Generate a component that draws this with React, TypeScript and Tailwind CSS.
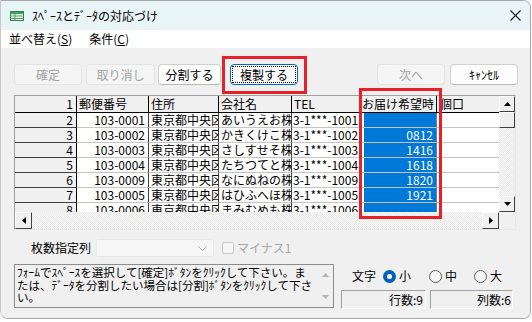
import React from "react";

const rows: string[][] = [
  ["2", "103-0001", "東京都中央区日本橋", "あいうえお株式会社", "3-1***-1001", ""],
  ["3", "103-0002", "東京都中央区日本橋", "かきくけこ株式会社", "3-1***-1002", "0812"],
  ["4", "103-0003", "東京都中央区日本橋", "さしすせそ株式会社", "3-1***-1003", "1416"],
  ["5", "103-0004", "東京都中央区日本橋", "たちつてと株式会社", "3-1***-1004", "1618"],
  ["6", "103-0009", "東京都中央区日本橋", "なにぬねの株式会社", "3-1***-1009", "1820"],
  ["7", "103-0005", "東京都中央区日本橋", "はひふへほ株式会社", "3-1***-1005", "1921"],
  ["8", "103-0006", "東京都中央区日本橋", "まみむめも株式会社", "3-1***-1006", ""],
];

function Tri({ dir, color = "#000" }: { dir: "up" | "down" | "left" | "right"; color?: string }) {
  const pts =
    dir === "up"
      ? "0,4 3.5,0 7,4"
      : dir === "down"
      ? "0,0 7,0 3.5,4"
      : dir === "left"
      ? "4,0 4,7 0,3.5"
      : "0,0 0,7 4,3.5";
  const w = dir === "up" || dir === "down" ? 7 : 4;
  const h = dir === "up" || dir === "down" ? 4 : 7;
  return (
    <svg width={w} height={h} viewBox={`0 0 ${w} ${h}`}>
      <polygon points={pts} fill={color} />
    </svg>
  );
}

function SBtn({ dir, className }: { dir: "up" | "down" | "left" | "right"; className: string }) {
  return (
    <div
      className={
        "flex shrink-0 items-center justify-center border border-t-[#fcfcfc] border-l-[#fcfcfc] border-r-[#404040] border-b-[#404040] bg-[#f0f0f0] " +
        className
      }
    >
      <Tri dir={dir} />
    </div>
  );
}

const track =
  "bg-[repeating-conic-gradient(#ffffff_0_25%,#e6e6e6_0_50%)] bg-[length:2px_2px]";

function Btn({ label, w, disabled }: { label: string; w: string; disabled?: boolean }) {
  return (
    <div
      className={
        "flex h-[21px] items-center justify-center rounded-[4px] border text-[12px] leading-none " +
        w +
        (disabled
          ? " border-[#e3e3e3] bg-[#f5f5f5] text-[#a2a2a2]"
          : " border-[#d0d0d0] border-b-[#b8b8b8] bg-[#fdfdfd] text-black")
      }
    >
      {label}
    </div>
  );
}

function Radio({ on }: { on?: boolean }) {
  return on ? (
    <div className="flex h-[13px] w-[13px] items-center justify-center rounded-full bg-[#005fb8]">
      <div className="h-[5px] w-[5px] rounded-full bg-white" />
    </div>
  ) : (
    <div className="h-[13px] w-[13px] rounded-full border border-[#5c5c5c] bg-[#f6f6f6]" />
  );
}

export default function App() {
  return (
    <div className="relative h-[322px] w-[532px] bg-white font-['Noto_Sans_CJK_JP',sans-serif] text-black">
      <div className="flex h-[319px] w-[531px] flex-col overflow-hidden rounded-tr-[8px] rounded-b-[8px] border border-[#a8a8a8] border-l-[#c8c8c8]">
        {/* title bar */}
        <div className="flex h-[29px] shrink-0 items-center bg-[#e8f4f6] pl-[9px]">
          <svg width="14" height="10" viewBox="0 0 14 10">
            <rect x="0.5" y="0.5" width="13" height="9" fill="#ffffff" stroke="#2f8a43" />
            <rect x="1" y="1" width="12" height="2" fill="#3aa357" />
            <line x1="1" y1="5" x2="13" y2="5" stroke="#3aa357" />
            <line x1="1" y1="7.5" x2="13" y2="7.5" stroke="#3aa357" />
            <line x1="5" y1="3" x2="5" y2="9" stroke="#3aa357" />
          </svg>
          <span className="ml-[8px] text-[12px] leading-none">ｽﾍﾟｰｽとﾃﾞｰﾀの対応づけ</span>
          <svg className="ml-auto mr-[9px]" width="11" height="11" viewBox="0 0 11 11">
            <path d="M0.5 0.5 L10.5 10.5 M10.5 0.5 L0.5 10.5" stroke="#1a1a1a" strokeWidth="1.1" />
          </svg>
        </div>
        {/* menu */}
        <div className="flex h-[18px] shrink-0 items-center gap-[17px] bg-white pl-[8px] text-[12px] leading-none">
          <span>
            並べ替え(<span className="underline">S</span>)
          </span>
          <span>
            条件(<span className="underline">C</span>)
          </span>
        </div>
        {/* body */}
        <div className="flex flex-1 flex-col bg-[#f0f0f0] pl-[13px] pr-[12px]">
          {/* buttons */}
          <div className="mt-[16px] flex h-[21px] items-center">
            <Btn label="確定" w="w-[68px]" disabled />
            <div className="w-[4px]" />
            <Btn label="取り消し" w="w-[69px]" disabled />
            <div className="w-[3px]" />
            <Btn label="分割する" w="w-[63px]" />
            <div className="w-[9px]" />
            <div className="relative flex h-[21px] w-[68px] items-center justify-center rounded-[4px] border border-[#0067c0] bg-[#fdfdfd] text-[12px] leading-none">
              <div className="absolute inset-[1px] border border-dotted border-black" />
              複製する
            </div>
            <div className="ml-auto flex gap-[5px]">
              <Btn label="次へ" w="w-[68px]" disabled />
              <Btn label="ｷｬﾝｾﾙ" w="w-[68px]" />
            </div>
          </div>
          {/* grid */}
          <div className="mt-[10px] flex h-[135px] w-[502px] flex-col border border-[#a0a0a0] border-r-[#e8e8e8] border-b-[#e8e8e8] text-[12px]">
            <div className="flex h-[116px]">
              <div className="h-[116px] w-[484px] overflow-hidden bg-white">
                {/* header */}
                <div className="flex h-[17px] leading-[15px]">
                  <div className="w-[62px] shrink-0 border-r border-b border-black bg-[#f0f0f0] pr-[3px] text-right">1</div>
                  <div className="w-[72px] shrink-0 overflow-hidden whitespace-nowrap border-r border-b border-black bg-[#f0f0f0] pl-[2px]">郵便番号</div>
                  <div className="w-[70px] shrink-0 overflow-hidden whitespace-nowrap border-r border-b border-black bg-[#f0f0f0] pl-[2px]">住所</div>
                  <div className="w-[73px] shrink-0 overflow-hidden whitespace-nowrap border-r border-b border-black bg-[#f0f0f0] pl-[2px]">会社名</div>
                  <div className="w-[69px] shrink-0 overflow-hidden whitespace-nowrap border-r border-b border-black bg-[#f0f0f0] pl-[2px]">TEL</div>
                  <div className="w-[76px] shrink-0 overflow-hidden whitespace-nowrap border-r border-b border-black bg-[#f0f0f0] pl-[1px]">お届け希望時</div>
                  <div className="w-[62px] shrink-0 overflow-hidden whitespace-nowrap border-b border-black bg-[#f0f0f0] pl-[3px]">個口</div>
                </div>
                {rows.map((r) => (
                  <div key={r[0]} className="flex h-[15px] leading-[14px]">
                    <div className="w-[62px] shrink-0 border-r border-b border-r-black border-b-[#404040] bg-[#f0f0f0] pr-[3px] text-right">{r[0]}</div>
                    <div className="w-[72px] shrink-0 overflow-hidden whitespace-nowrap border-r border-b border-r-[#404040] border-b-[#c4c4c4] pr-[3px] text-right">{r[1]}</div>
                    <div className="w-[70px] shrink-0 overflow-hidden whitespace-nowrap border-r border-b border-r-[#404040] border-b-[#c4c4c4] pl-[2px]">{r[2]}</div>
                    <div className="w-[73px] shrink-0 overflow-hidden whitespace-nowrap border-r border-b border-r-[#404040] border-b-[#c4c4c4] pl-[2px]">{r[3]}</div>
                    <div className="w-[69px] shrink-0 overflow-hidden whitespace-nowrap border-r border-b border-r-[#404040] border-b-[#c4c4c4] pl-[1px]">{r[4]}</div>
                    <div className="w-[76px] shrink-0 border-r border-b border-r-[#808080] border-b-[#c4c4c4] pl-[3px]">
                      <div className="h-full bg-[#0078d7] pr-[3px] text-right text-white">{r[5]}</div>
                    </div>
                    <div className="w-[62px] shrink-0 border-b border-b-[#c4c4c4]" />
                  </div>
                ))}
              </div>
              {/* vscroll */}
              <div className="flex w-[16px] flex-col">
                <SBtn dir="up" className="h-[16px] w-[16px]" />
                <div className="h-[16px] w-[16px] border border-t-[#fcfcfc] border-l-[#fcfcfc] border-r-[#404040] border-b-[#404040] bg-[#f0f0f0]" />
                <div className={"flex-1 " + track} />
                <SBtn dir="down" className="h-[16px] w-[16px]" />
              </div>
            </div>
            {/* hscroll */}
            <div className="flex h-[17px]">
              <SBtn dir="left" className="h-[17px] w-[17px]" />
              <div className={"w-[450px] " + track} />
              <SBtn dir="right" className="h-[17px] w-[17px]" />
              <div className="w-[16px] bg-[#f0f0f0]" />
            </div>
          </div>
          {/* combo row */}
          <div className="mt-[9px] flex h-[18px] items-center text-[12px] leading-none">
            <span className="pl-[17px]">枚数指定列</span>
            <div className="ml-[5px] flex h-[18px] w-[118px] items-center justify-end rounded-[3px] border border-[#e8e8e8] bg-[#f6f6f6] pr-[6px]">
              <svg width="9" height="5" viewBox="0 0 9 5">
                <path d="M0.5 0.5 L4.5 4.5 L8.5 0.5" fill="none" stroke="#b0b0b0" />
              </svg>
            </div>
            <div className="ml-[8px] h-[12px] w-[12px] rounded-[2px] border border-[#c6c6c6] bg-[#f6f6f6]" />
            <span className="ml-[3px] text-[#a8a8a8]">マイナス1</span>
          </div>
          {/* bottom row */}
          <div className="mt-[7px] flex">
            <div className="flex h-[44px] w-[320px] border border-[#8c8c8c] bg-[#f0f0f0]">
              <div className="flex-1 overflow-hidden whitespace-nowrap pl-[2px] pt-[1px] text-[11.5px] leading-[12.5px]">
                ﾌｫｰﾑでｽﾍﾟｰｽを選択して[確定]ﾎﾞﾀﾝをｸﾘｯｸして下さい。ま
                <br />
                たは、ﾃﾞｰﾀを分割したい場合は[分割]ﾎﾞﾀﾝをｸﾘｯｸして下さ
                <br />
                い。
              </div>
              <div className="flex w-[15px] flex-col items-center justify-between py-[8px]">
                <Tri dir="up" color="#b4b4b4" />
                <Tri dir="down" color="#b4b4b4" />
              </div>
            </div>
            <div className="ml-[7px] flex flex-col">
              <div className="flex h-[24px] items-center text-[12px] leading-none">
                <span className="pl-[11px]">文字</span>
                <div className="ml-[7px]">
                  <Radio on />
                </div>
                <span className="ml-[3px]">小</span>
                <div className="ml-[18px]">
                  <Radio />
                </div>
                <span className="ml-[3px]">中</span>
                <div className="ml-[17px]">
                  <Radio />
                </div>
                <span className="ml-[3px]">大</span>
              </div>
              <div className="mt-[2px] flex gap-[4px] text-[12px] leading-[17px]">
                <div className="h-[19px] w-[85px] border border-t-[#a0a0a0] border-l-[#a0a0a0] border-r-white border-b-white pr-[2px] text-right">行数:9</div>
                <div className="h-[19px] w-[83px] border border-t-[#a0a0a0] border-l-[#a0a0a0] border-r-white border-b-white pr-[1px] text-right">列数:6</div>
              </div>
            </div>
          </div>
        </div>
      </div>
      {/* annotations */}
      <div className="absolute left-[222px] top-[56px] h-[38px] w-[85px] border-[3px] border-[#e8202a]" />
      <div className="absolute left-[359px] top-[88px] h-[131px] w-[83px] border-[3px] border-[#e8202a]" />
    </div>
  );
}
